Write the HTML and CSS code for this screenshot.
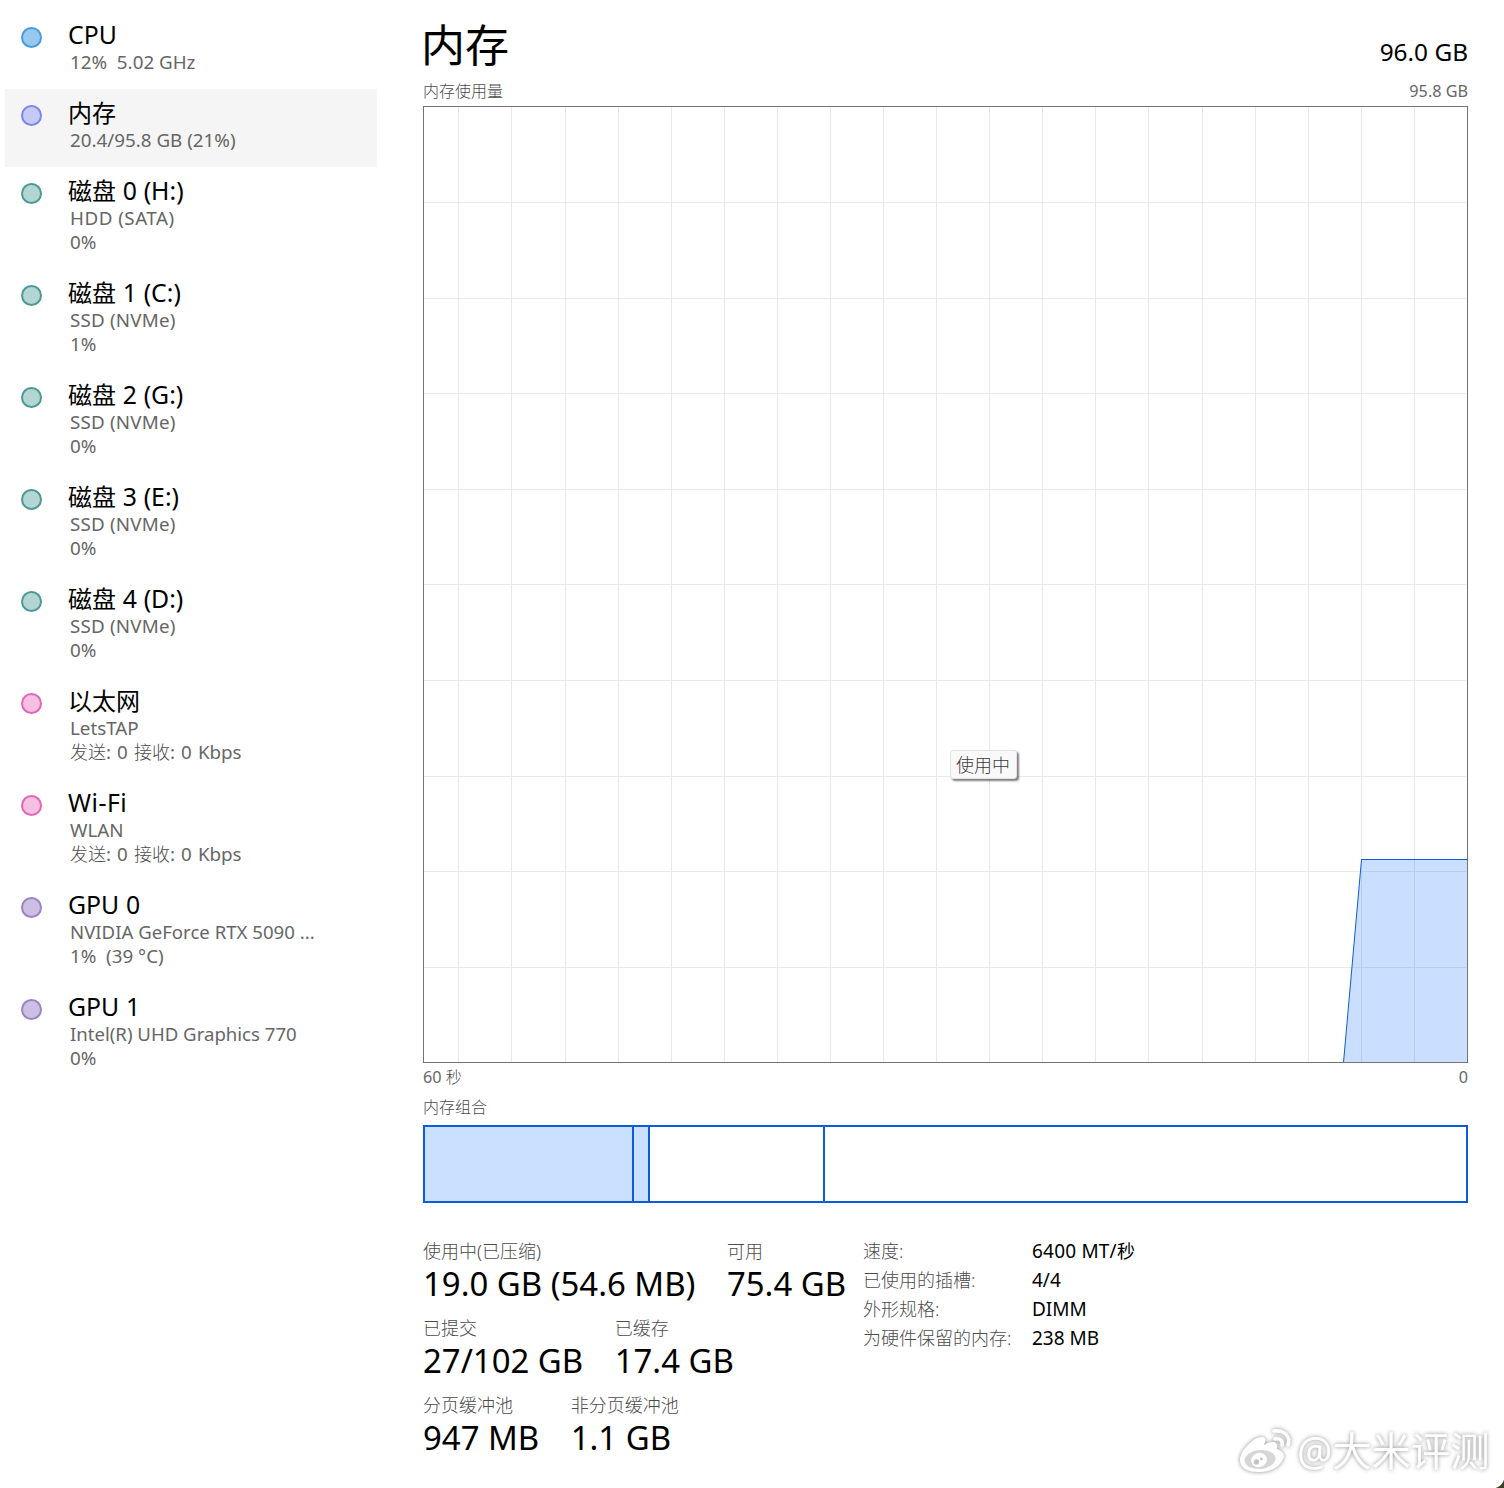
FILE: index.html
```html
<!DOCTYPE html>
<html lang="zh-CN">
<head>
  <meta charset="UTF-8">
  <title>内存</title>
  <link rel="stylesheet" href="styles.css">
</head>
<body>
  <div class="app">

    <!-- Sidebar -->
    <nav class="sidebar">
      <div class="item">
        <i class="dot dot--cpu"></i>
        <div class="item__text">
          <h2>CPU</h2>
          <p>12%&nbsp; 5.02 GHz</p>
        </div>
      </div>
      <div class="item item--active">
        <i class="dot dot--memory"></i>
        <div class="item__text">
          <h2><span class="zh">内存</span></h2>
          <p>20.4/95.8 GB (21%)</p>
        </div>
      </div>
      <div class="item">
        <i class="dot dot--disk"></i>
        <div class="item__text">
          <h2><span class="zh">磁盘</span> 0 (H:)</h2>
          <p class="wide">HDD (SATA)</p>
          <p>0%</p>
        </div>
      </div>
      <div class="item">
        <i class="dot dot--disk"></i>
        <div class="item__text">
          <h2><span class="zh">磁盘</span> 1 (C:)</h2>
          <p class="model">SSD (NVMe)</p>
          <p>1%</p>
        </div>
      </div>
      <div class="item">
        <i class="dot dot--disk"></i>
        <div class="item__text">
          <h2><span class="zh">磁盘</span> 2 (G:)</h2>
          <p class="model">SSD (NVMe)</p>
          <p>0%</p>
        </div>
      </div>
      <div class="item">
        <i class="dot dot--disk"></i>
        <div class="item__text">
          <h2><span class="zh">磁盘</span> 3 (E:)</h2>
          <p class="model">SSD (NVMe)</p>
          <p>0%</p>
        </div>
      </div>
      <div class="item">
        <i class="dot dot--disk"></i>
        <div class="item__text">
          <h2><span class="zh">磁盘</span> 4 (D:)</h2>
          <p class="model">SSD (NVMe)</p>
          <p>0%</p>
        </div>
      </div>
      <div class="item">
        <i class="dot dot--net"></i>
        <div class="item__text">
          <h2><span class="zh">以太网</span></h2>
          <p>LetsTAP</p>
          <p class="rate"><span class="zh">发送</span>: 0 <span class="zh">接收</span>: 0 Kbps</p>
        </div>
      </div>
      <div class="item">
        <i class="dot dot--net"></i>
        <div class="item__text">
          <h2 class="wide">Wi-Fi</h2>
          <p>WLAN</p>
          <p class="rate"><span class="zh">发送</span>: 0 <span class="zh">接收</span>: 0 Kbps</p>
        </div>
      </div>
      <div class="item">
        <i class="dot dot--gpu"></i>
        <div class="item__text">
          <h2>GPU 0</h2>
          <p class="name">NVIDIA GeForce RTX 5090 ...</p>
          <p>1%&nbsp; (39 °C)</p>
        </div>
      </div>
      <div class="item">
        <i class="dot dot--gpu"></i>
        <div class="item__text">
          <h2>GPU 1</h2>
          <p class="name">Intel(R) UHD Graphics 770</p>
          <p>0%</p>
        </div>
      </div>
    </nav>

    <!-- Memory details -->
    <main class="main">
      <header class="header">
        <h1>内存</h1>
        <span class="total">96.0 GB</span>
      </header>
      <div class="caption caption--top">
        <span class="zh">内存使用量</span>
        <span>95.8 GB</span>
      </div>

      <div class="chart">
        <svg width="1045" height="957" viewBox="0 0 1045 957">
          <path class="grid" d="M35.5 0V957M88.5 0V957M142.5 0V957M195.5 0V957M248.5 0V957M301.5 0V957M354.5 0V957M407.5 0V957M460.5 0V957M513.5 0V957M566.5 0V957M619.5 0V957M672.5 0V957M725.5 0V957M779.5 0V957M832.5 0V957M885.5 0V957M938.5 0V957M991.5 0V957" />
          <path class="grid" d="M0 96.5H1043M0 192.5H1043M0 287.5H1043M0 383.5H1043M0 478.5H1043M0 574.5H1043M0 670.5H1043M0 765.5H1043M0 861.5H1043" />
          <path class="usage-fill" d="M920.5 956.5L938.5 753.5H1044.5V956.5Z" />
          <path class="usage-line" d="M920.5 956.5L938.5 753.5H1044.5" />
          <rect class="frame" x="0.5" y="0.5" width="1044" height="956" />
        </svg>
        <div class="tooltip">使用中</div>
      </div>

      <div class="caption caption--axis">
        <span>60 <span class="zh">秒</span></span>
        <span>0</span>
      </div>
      <div class="caption caption--bar"><span class="zh">内存组合</span></div>

      <div class="composition">
        <div class="seg seg--used"></div>
        <div class="seg seg--modified"></div>
        <div class="seg seg--standby"></div>
      </div>

      <section class="details">
        <div class="stats">
          <div class="stats__row">
            <div class="stat">
              <span class="stat__label">使用中(已压缩)</span>
              <span class="stat__value">19.0 GB (54.6 MB)</span>
            </div>
            <div class="stat">
              <span class="stat__label">可用</span>
              <span class="stat__value">75.4 GB</span>
            </div>
          </div>
          <div class="stats__row">
            <div class="stat">
              <span class="stat__label">已提交</span>
              <span class="stat__value">27/102 GB</span>
            </div>
            <div class="stat">
              <span class="stat__label">已缓存</span>
              <span class="stat__value">17.4 GB</span>
            </div>
          </div>
          <div class="stats__row">
            <div class="stat">
              <span class="stat__label">分页缓冲池</span>
              <span class="stat__value">947 MB</span>
            </div>
            <div class="stat">
              <span class="stat__label">非分页缓冲池</span>
              <span class="stat__value">1.1 GB</span>
            </div>
          </div>
        </div>
        <dl class="specs">
          <dt>速度:</dt>
          <dd class="speed">6400 MT/<span class="zh">秒</span></dd>
          <dt>已使用的插槽:</dt>
          <dd>4/4</dd>
          <dt>外形规格:</dt>
          <dd>DIMM</dd>
          <dt>为硬件保留的内存:</dt>
          <dd>238 MB</dd>
        </dl>
      </section>
    </main>

    <!-- Watermark -->
    <div class="watermark">
      <svg width="56" height="48" viewBox="0 0 56 48">
        <path fill="#fff" d="M24 10C28 10 28 14 26 18C32 14 41 13 39 22C45 24 48 28 44 34C40 42 30 45 20 45C9 45 2 41 2 33C2 24 15 10 24 10Z" />
        <ellipse cx="22" cy="32.5" rx="15.5" ry="9.5" fill="#d6d6d6" transform="rotate(-6 22 32.5)" />
        <ellipse cx="21" cy="33" rx="8" ry="7" fill="#fff" transform="rotate(-20 21 33)" />
        <circle cx="18.5" cy="35" r="2.7" fill="#c4c4c4" />
        <circle cx="23.5" cy="32" r="1.4" fill="#c4c4c4" />
        <path fill="none" stroke="#fff" stroke-width="3.6" stroke-linecap="round" d="M36 4C47 3 53 10 50 18M37 12C42 11 45 14 44 18" />
      </svg>
      <span>@大米评测</span>
    </div>
    <div class="corner"></div>
  </div>
</body>
</html>
```
FILE: styles.css
```css
* {
  box-sizing: border-box;
  margin: 0;
  padding: 0;
}
body {
  background: #fff;
  color: #000;
  font-family: "Noto Sans", "Noto Sans CJK SC", sans-serif;
  overflow: hidden;
}
h1, h2 {
  font-weight: 400;
}

.app {
  position: relative;
  display: flex;
  width: 1504px;
  height: 1488px;
  overflow: hidden;
  white-space: nowrap;
}

/* ---------- SIDEBAR ---------- */
.sidebar {
  width: 377px;
  padding: 11px 0 0 5px;
}
.item {
  display: flex;
  padding: 11px 0 15px 16px;
}
.item--active {
  background: #f5f5f5;
}
.item__text {
  margin-left: 26px;
}
.item h2 {
  height: 28px;
  font-size: 24.8px;
  line-height: 25px;
  word-spacing: 0.3px;
}
.item h2 .zh {
  font-size: 24px;
}
.item p {
  height: 24px;
  padding-left: 2px;
  color: #666;
  font-size: 18.8px;
  line-height: 24px;
}
.item p .zh {
  color: #4c4c4c;
  font-size: 18px;
  font-weight: 300;
}
.item .rate {
  word-spacing: 1.2px;
}
.item .name {
  font-size: 18.6px;
}
.item .wide {
  letter-spacing: 0.5px;
}
.item .model {
  letter-spacing: 0.2px;
}

.dot {
  width: 21px;
  height: 21px;
  margin-top: 5px;
  border: 2px solid;
  border-radius: 50%;
}
.dot--cpu {
  background: #98c8ee;
  border-color: #4a9bde;
}
.dot--memory {
  background: #c5caf4;
  border-color: #7c88e8;
}
.dot--disk {
  background: #b3d5d3;
  border-color: #4c9894;
}
.dot--net {
  background: #f6c0e2;
  border-color: #e564b7;
}
.dot--gpu {
  background: #cdbfe3;
  border-color: #9a83c2;
}

/* ---------- HEADER ---------- */
.main {
  width: 1045px;
  margin-left: 46px;
  padding-top: 18px;
}
.header {
  display: flex;
  justify-content: space-between;
  height: 62px;
}
.header h1 {
  margin-left: -2px;
  font-size: 44px;
  line-height: 54px;
}
.total {
  margin-top: 17px;
  font-size: 24.4px;
  line-height: 34px;
}
.caption {
  display: flex;
  justify-content: space-between;
  color: #666;
  font-size: 16.2px;
}
.caption .zh {
  color: #4c4c4c;
  font-size: 16px;
  font-weight: 300;
}
.caption--top {
  height: 26px;
  line-height: 22px;
}
.caption--axis {
  height: 28px;
  line-height: 28px;
}
.caption--bar {
  height: 34px;
  line-height: 32px;
}

/* ---------- CHART ---------- */
.chart {
  position: relative;
  height: 957px;
}
.chart svg {
  display: block;
}
.grid {
  fill: none;
  stroke: #e9e9e9;
}
.usage-fill {
  fill: #0a6cff;
  fill-opacity: 0.215;
}
.usage-line {
  fill: none;
  stroke: #0f5bd5;
}
.frame {
  fill: none;
  stroke: #737373;
}
.tooltip {
  position: absolute;
  left: 527px;
  top: 644px;
  width: 67px;
  height: 29px;
  padding-right: 1px;
  border: 1px solid #e3e3e3;
  border-radius: 3px;
  background: #f9f9f9;
  box-shadow: 2px 2px 2px rgba(0, 0, 0, 0.5);
  color: #3c3c3c;
  font-size: 18px;
  font-weight: 300;
  line-height: 28px;
  text-align: center;
}

/* ---------- COMPOSITION BAR ---------- */
.composition {
  display: flex;
  height: 78px;
  border: 2px solid #0a5cd8;
}
.seg {
  border-right: 2px solid #0a5cd8;
}
.seg--used {
  width: 209px;
  background: #cae0ff;
}
.seg--modified {
  width: 16px;
  background: #cae0ff;
}
.seg--standby {
  width: 175px;
}

/* ---------- DETAILS ---------- */
.details {
  display: flex;
  padding-top: 34px;
}
.stats {
  width: 440px;
}
.stats__row {
  display: flex;
  gap: 31.5px;
  height: 77px;
}
.stat {
  display: flex;
  flex-direction: column;
}
.stat__label {
  color: #4c4c4c;
  font-size: 18px;
  font-weight: 300;
  line-height: 28px;
}
.stat__value {
  font-size: 32.9px;
  line-height: 38px;
}
.specs {
  display: grid;
  grid-template-columns: 169px auto;
  grid-auto-rows: 29px;
  height: 116px;
  font-size: 19px;
  line-height: 28px;
}
.specs dt {
  color: #4c4c4c;
  font-size: 18px;
  font-weight: 300;
}
.specs .zh {
  font-size: 18px;
}
.specs .speed {
  letter-spacing: 0.2px;
}

/* ---------- WATERMARK ---------- */
.watermark {
  position: absolute;
  left: 1238px;
  top: 1427px;
  display: flex;
  color: #fff;
  font-size: 39.3px;
  line-height: 48px;
  filter: drop-shadow(0 0 2px rgba(0, 0, 0, 0.45));
}
.watermark svg {
  margin-right: 3px;
}
.corner {
  position: absolute;
  right: 0;
  bottom: 0;
  width: 12px;
  height: 12px;
  background: radial-gradient(circle at 0 0, transparent 12px, #3c4123 13px);
}
```
